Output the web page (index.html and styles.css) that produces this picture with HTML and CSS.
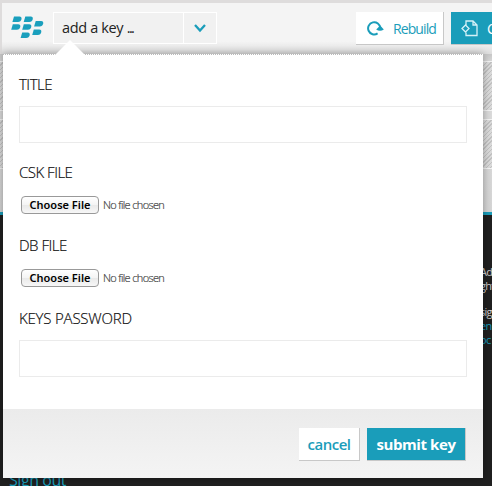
FILE: index.html
```
<!DOCTYPE html>
<html lang="en">
<head>
<meta charset="utf-8">
<title>Add a key</title>
<link rel="stylesheet" href="styles.css">
</head>
<body>
<div class="page">
  <header class="toolbar">
    <svg class="logo" width="34" height="24" viewBox="0 0 34 24" fill="#1a9fbd">
      <path id="dot" d="M3 .5H8.4C12 .5 10.8 6 7 6H1.4Z"/>
      <use href="#dot" x="11.3"/>
      <use href="#dot" x="-1.2" y="7.7"/>
      <use href="#dot" x="9.8" y="7.7"/>
      <use href="#dot" x="21.7" y="4.6"/>
      <use href="#dot" x="8.2" y="15.9"/>
      <use href="#dot" x="19.8" y="12.9"/>
    </svg>
    <div class="select">
      <span class="select-label"><span>add a key <span class="dots">...</span></span></span>
      <span class="select-arrow"><svg width="12" height="9" viewBox="0 0 12 9"><path d="M1 1 6 6.5 11 1" fill="none" stroke="#1a9dba" stroke-width="2.3"/></svg></span>
    </div>
    <div class="actions">
      <a class="btn rebuild">
        <svg width="17" height="16" viewBox="0 0 17 16"><path d="M10.6 13.4A6.1 6.1 0 1 1 13.3 8" fill="none" stroke="#1a9dba" stroke-width="2"/><path d="M9.2 9.6 13.2 5.4 16.8 9.6Q13 12 9.2 9.6Z" fill="#1a9dba"/></svg>
        <span>Rebuild</span>
      </a>
      <a class="btn primary convert">
        <svg width="17" height="17" viewBox="0 0 17 17" fill="none" stroke="#d5f1f7" stroke-width="1.3"><path d="M5 5V1H12L16 5V15.5H5V12.5M12 1V5H16"/><path d="M4.5 5 1 8.5 4.5 12 8 8.5Z"/></svg>
        <span>Convert</span>
      </a>
    </div>
  </header>
  <main class="content"><div class="row"></div><div class="row"></div></main>
  <footer class="site-footer">
    <div class="about"><p>Ad</p><p>ght</p><p class="credit">sig</p><p class="link">en</p><p class="link">oc</p></div>
    <a class="signout">Sign out</a>
  </footer>
</div>
<form class="dialog">
  <svg class="pointer" width="32" height="16" viewBox="0 0 32 16"><path d="M0 16 16 0 32 16Z" fill="#fff"/></svg>
  <div class="fields">
    <label><span>TITLE</span></label>
    <div class="input"></div>
    <label><span>CSK FILE</span></label>
    <div class="file"><button type="button"><span>Choose File</span></button><span class="none">No file chosen</span></div>
    <label><span>DB FILE</span></label>
    <div class="file"><button type="button"><span>Choose File</span></button><span class="none">No file chosen</span></div>
    <label class="pass"><span>KEYS PASSWORD</span></label>
    <div class="input"></div>
  </div>
  <div class="dialog-footer"><a class="btn cancel">cancel</a><a class="btn primary submit">submit key</a></div>
</form>
</body>
</html>
```
FILE: styles.css
```
* { box-sizing: border-box; }
body { margin: 0; width: 492px; height: 486px; overflow: hidden; position: relative; font-family: "Open Sans", "Noto Sans", sans-serif; color: #222; }
.page { width: 492px; height: 486px; padding-top: 3px; overflow: hidden; display: flex; flex-direction: column; background: #dedcdc; }
.toolbar { height: 51px; flex: none; margin-left: 2px; background: linear-gradient(#f4f4f4 75%, #dedede); display: flex; align-items: flex-start; padding: 9px 0 0 9px; }
.logo { margin: 4px 8px 0 0; flex: none; }
.select { display: flex; width: 164px; height: 32px; border: 1px solid #fff; background: #f1f1f1; flex: none; }
.select-label { width: 130px; border-right: 1px solid #fff; padding-left: 8px; font-size: 14.5px; letter-spacing: -.35px; line-height: 29px; white-space: nowrap; }
.dots { letter-spacing: -1.6px; }
.select-arrow { flex: 1; display: flex; align-items: center; justify-content: center; padding-top: 1px; }
.actions { display: flex; gap: 7px; margin-left: 139px; }
.btn { display: flex; align-items: center; height: 33px; border: solid #c8c8c8; border-width: 0 1px 1px 0; background: #fff; color: #1a9dba; white-space: nowrap; flex: none; }
.btn.primary { background: #1a9dba; color: #fff; }
.rebuild { width: 88px; padding-left: 11px; gap: 9px; font-size: 14px; letter-spacing: -.95px; letter-spacing: -.9px; }
.rebuild { letter-spacing: -.9px; }
.convert { width: 95px; padding-left: 10px; gap: 9px; font-size: 14px; }
.content { height: 158px; flex: none; padding-top: 7px; background: linear-gradient(#c8c8c8, #dedede 10px, #d5d5d5); }
.row { height: 50px; margin-bottom: 8px; border: solid #f5f5f5; border-width: 1px 0; background: repeating-linear-gradient(135deg, #dcdcdc 0 2px, #c3c3c3 2px 3px); }
.site-footer { flex: 1; display: flex; flex-direction: column; border-top: 3px solid #1a9dba; background: #202020; }
.about { height: 255px; flex: none; padding: 50px 0 0 480px; font-size: 11px; line-height: 14px; letter-spacing: -.7px; color: #ccc; white-space: nowrap; }
.about p { margin: 0; }
.about .credit { margin-top: 12px; }
.about .link { color: #1a9dba; }
.signout { padding-left: 9px; font-size: 16px; line-height: 20px; color: #1a9dba; font-weight: 400; letter-spacing: -.45px; }
.dialog { position: absolute; left: 3px; top: 54px; width: 480px; height: 424px; background: #fff; box-shadow: 0 0 8px rgba(0,0,0,.35); display: flex; flex-direction: column; }
.dialog::before { content: ""; height: 1px; flex: none; background: repeating-linear-gradient(90deg, #bbb 0 1px, #fff 1px 2px); }
.pointer { position: absolute; left: 51px; top: -14px; }
.fields { flex: 1; padding: 19px 16px 0; display: flex; flex-direction: column; }
label { height: 20px; margin-bottom: 12px; font-size: 15px; line-height: 20px; font-weight: 300; letter-spacing: -.5px; color: #111; -webkit-text-stroke: .2px #111; }
.pass { letter-spacing: -.2px; }
.input { height: 37px; flex: none; border: 1px solid #ebebeb; margin-bottom: 19px; }
.file { display: flex; align-items: center; height: 22px; margin-bottom: 19px; padding-left: 2px; }
.file button { width: 78px; height: 18px; padding: 0; border: 1px solid #999; border-radius: 4px; background: linear-gradient(#fff, #f4f4f4 50%, #e9e9e9 51%, #f7f7f7); font: 600 11px/15px "Noto Sans", sans-serif; color: #000; white-space: nowrap; }
.file button span { position: relative; top: -1px; }
.none { margin: -2px 0 0 4px; font-size: 11px; letter-spacing: -.65px; color: #444; font-weight: 300; -webkit-text-stroke: .2px #444; }
.dialog-footer { height: 69px; flex: none; padding: 19px 17px 0 0; display: flex; justify-content: flex-end; gap: 7px; background: linear-gradient(#ebebeb, #f4f4f4); }
.cancel, .submit { justify-content: center; font-size: 15px; padding-bottom: 0; }
.cancel { width: 61px; font-weight: 600; letter-spacing: -.5px; }
.submit { width: 99px; font-weight: 700; letter-spacing: -.4px; }
```
